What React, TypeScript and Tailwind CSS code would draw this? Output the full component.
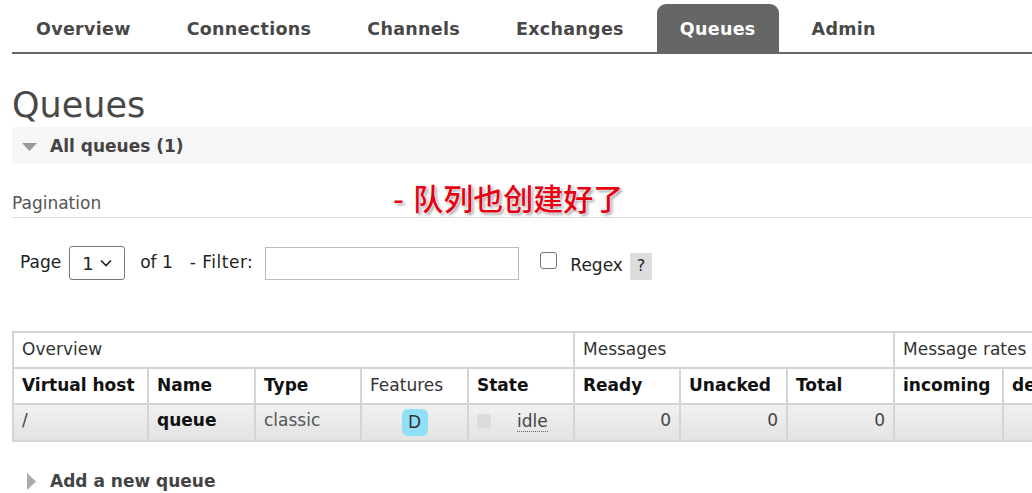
import React from 'react';

const tabs = ['Overview', 'Connections', 'Channels', 'Exchanges', 'Queues', 'Admin'];

const th = 'border-2 border-[#d4d4d4] px-[8px] h-[36px] text-left align-middle whitespace-nowrap overflow-hidden';

export default function App() {
  return (
    <div className="relative w-[1032px] h-[493px] overflow-hidden bg-white pl-[12px] text-[17px] text-[#333] font-['DejaVu_Sans','Noto_Sans_CJK_SC',sans-serif]">
      {/* top navigation */}
      <nav className="flex items-end h-[54px] border-b-2 border-[#666] pl-[1px] gap-[10px]">
        {tabs.map((t) => (
          <div
            key={t}
            className={
              t === 'Queues'
                ? 'h-[48px] px-[23px] pt-[3px] flex items-center rounded-t-[9px] bg-[#666] text-white font-bold text-[17.5px] tracking-[0.3px]'
                : 'h-[48px] px-[23px] pt-[3px] flex items-center font-bold text-[17.5px] tracking-[0.3px] text-[#484848]'
            }
          >
            {t}
          </div>
        ))}
      </nav>

      <h1 className="mt-[31px] text-[35px] leading-[40px] text-[#484848]">Queues</h1>

      <div className="mt-[2px] h-[37px] bg-[#f6f6f6] flex items-center pl-[10px] pt-[3px] gap-[13px] font-bold text-[#444]">
        <svg width="15" height="8" viewBox="0 0 15 8">
          <polygon points="0,0 15,0 7.5,8" fill="#999" />
        </svg>
        <span>All queues (1)</span>
      </div>

      <div className="mt-[26px] leading-[26px] pb-[1px] border-b border-[#ddd] text-[#555]">Pagination</div>

      {/* annotation overlay */}
      <div className="absolute left-[393px] top-[180px] text-[30px] leading-[40px] font-medium text-[#e60012] [text-shadow:0_0_2px_#fff,0_0_2px_#fff,2px_2px_3px_#999]">
        - 队列也创建好了
      </div>

      <div className="mt-[28px] h-[34px] flex items-center text-[#222]">
        <span className="ml-[8px]">Page</span>
        <div className="ml-[8px] w-[56px] h-[34px] border border-[#777] rounded-[3px] flex items-center justify-between px-[12px]">
          <span className="text-[18px]">1</span>
          <svg width="12" height="8" viewBox="0 0 12 8">
            <polyline points="1,1.5 6,6.5 11,1.5" fill="none" stroke="#222" strokeWidth="1.6" />
          </svg>
        </div>
        <span className="ml-[15px]">of 1</span>
        <span className="ml-[17px] tracking-[0.5px]">- Filter:</span>
        <div className="ml-[12px] w-[254px] h-[33px] border border-[#bbb] bg-white" />
        <div className="ml-[21px] w-[17px] h-[17px] border border-[#777] rounded-[3px] -mt-[6px]" />
        <span className="ml-[13px] mt-[6px]">Regex</span>
        <span className="ml-[7px] mt-[6px] w-[22px] h-[27px] bg-[#ddd] flex items-center justify-center text-[16px]">?</span>
      </div>

      <table className="mt-[51px] table-fixed border-collapse w-[1200px]">
        <colgroup>
          <col className="w-[135px]" />
          <col className="w-[107px]" />
          <col className="w-[106px]" />
          <col className="w-[107px]" />
          <col className="w-[106px]" />
          <col className="w-[106px]" />
          <col className="w-[107px]" />
          <col className="w-[107px]" />
          <col className="w-[109px]" />
          <col className="w-[120px]" />
          <col className="w-[90px]" />
        </colgroup>
        <thead>
          <tr>
            <th colSpan={5} className={th + ' font-normal'}>Overview</th>
            <th colSpan={3} className={th + ' font-normal'}>Messages</th>
            <th colSpan={3} className={th + ' font-normal'}>Message rates</th>
          </tr>
          <tr className="text-[#111]">
            <th className={th}>Virtual host</th>
            <th className={th}>Name</th>
            <th className={th}>Type</th>
            <th className={th + ' font-normal text-[#333]'}>Features</th>
            <th className={th}>State</th>
            <th className={th}>Ready</th>
            <th className={th}>Unacked</th>
            <th className={th}>Total</th>
            <th className={th}>incoming</th>
            <th className={th}>deliver / get</th>
            <th className={th}>ack</th>
          </tr>
        </thead>
        <tbody>
          <tr className="bg-gradient-to-b from-[#f2f2f2] to-[#e2e2e2] text-[#444]">
            <td className={th + ' h-[37px] pb-[3px]'}>/</td>
            <td className={th + ' font-bold text-[#111] pb-[3px]'}>queue</td>
            <td className={th + ' text-[#555] pb-[3px]'}>classic</td>
            <td className={th}>
              <div className="flex justify-center">
                <span className="w-[26px] h-[27px] rounded-[6px] bg-[#8fdff7] flex items-center justify-center text-[#333]">D</span>
              </div>
            </td>
            <td className={th + ' pb-[3px]'}>
              <div className="flex items-center">
                <span className="w-[14px] h-[14px] bg-[#dcdcdc]" />
                <span className="ml-[26px] border-b border-dotted border-[#666] leading-[20px]">idle</span>
              </div>
            </td>
            <td className={th + ' text-right pb-[3px]'}>0</td>
            <td className={th + ' text-right pb-[3px]'}>0</td>
            <td className={th + ' text-right pb-[3px]'}>0</td>
            <td className={th}></td>
            <td className={th}></td>
            <td className={th}></td>
          </tr>
        </tbody>
      </table>

      <div className="mt-[26px] leading-[26px] flex items-center pl-[15px] gap-[14px] font-bold text-[#444]">
        <svg width="9" height="17" viewBox="0 0 9 17">
          <polygon points="0,0 9,8.5 0,17" fill="#aaa" />
        </svg>
        <span>Add a new queue</span>
      </div>
    </div>
  );
}
